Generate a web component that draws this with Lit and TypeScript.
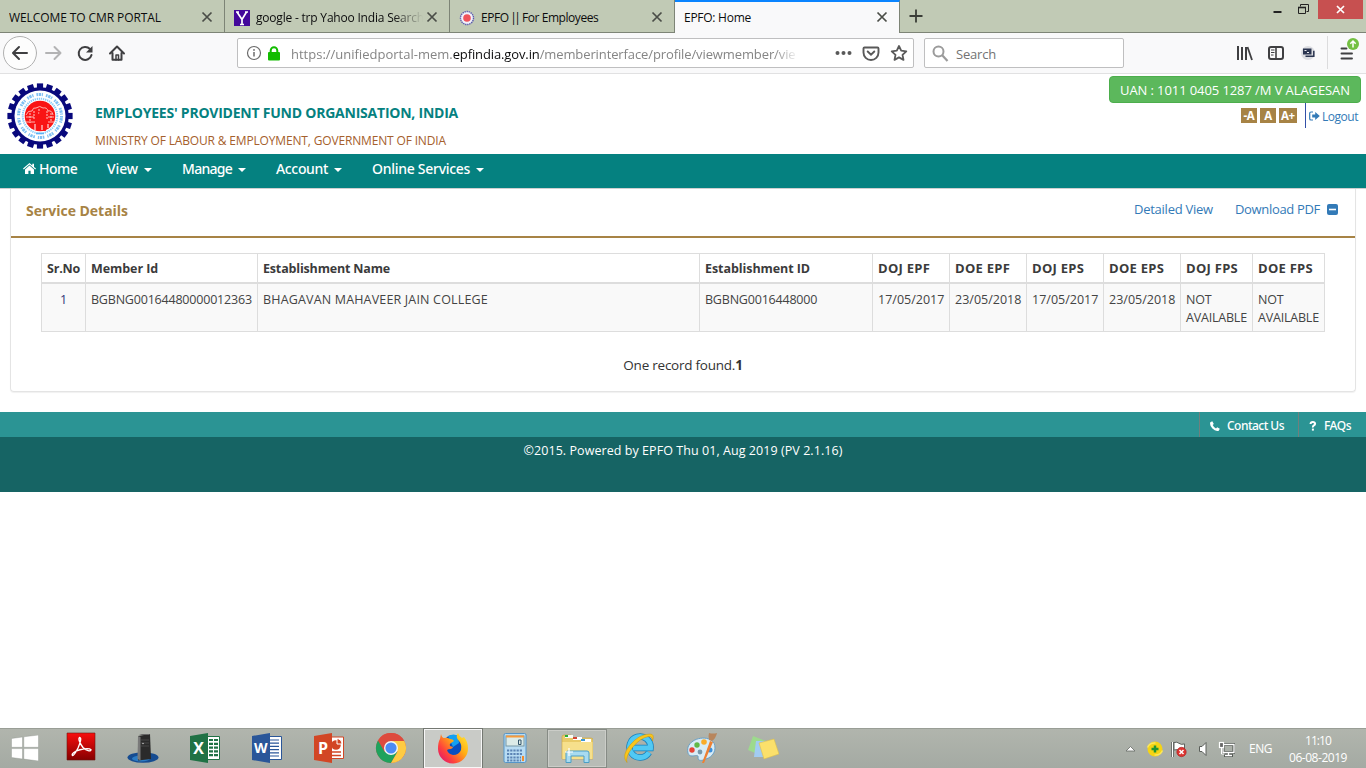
import { LitElement, html, css, svg } from "lit";
import { customElement } from "lit/decorators.js";

const closeIcon = html`<svg class="x" viewBox="0 0 12 12" width="12" height="12"><path d="M1.5 1.5l9 9M10.5 1.5l-9 9" stroke="#4a4d47" stroke-width="1.7" fill="none"/></svg>`;

/* EPFO gear emblem */
const teeth = Array.from({ length: 20 }, (_, i) => i * 18);
const emblem = html`<svg class="emblem" viewBox="-33 -33 66 66" width="66" height="66">
  ${teeth.map((a) => svg`<rect x="-3.1" y="-32.6" width="6.2" height="8" fill="#08087c" transform="rotate(${a})"/>`)}
  <circle r="28.800" fill="#08087c"/><circle r="25.500" fill="#fff"/>
  <circle r="21.500" fill="none" stroke="#7fc0f3" stroke-width="3" stroke-dasharray="1.6 .7 2.4 .8 1.2 3"/>
  <circle r="17.300" fill="none" stroke="#8ccbf7" stroke-width="2" stroke-dasharray="1.3 .8"/>
  <circle r="15.300" fill="#f91414"/>
  <path d="M-14-1q2-5 6-4q1-4 4-3q4-3 7 0q4-1 5 3q4-1 5 4M-14 1h8M8 1h6M-14 6h9M8 6h6" stroke="#ffb4ae" stroke-width="1" fill="none"/>
  <path d="M-10-3v10M-6-5v9M-1-7v5M7-5v9M11-3v9" stroke="#ffc8c2" stroke-width="1" stroke-dasharray="2 1"/>
  <circle cx="2" cy="-3" r="2.800" fill="#f91414"/><path d="M-2 1l4-1 4 2 1 7h-2l1 6H3l-1-5-2 5h-3l2-7z" fill="#f91414"/>
  <path d="M-5 8v6M8 8v4M2 9v5" stroke="#fff" stroke-width="1"/>
  <path d="M-4 17.500h8" stroke="#5eb2f3" stroke-width="1.500"/>
</svg>`;

const taskIcons = [
  { n: "pdf", s: "", g: svg`<defs><linearGradient id="ra" x2="0" y2="1"><stop offset="0" stop-color="#f90d0d"/><stop offset="1" stop-color="#850000"/></linearGradient></defs><path d="M2 1h28v27H2z" fill="url(#ra)" stroke="#6b1713" stroke-width=".6"/><path d="M14.500 5.500c2.500 0 .5 6-1.500 10.500-2 4-4 7.500-5.500 7.500-1.500-1.500 2.500-4.500 7.500-5.700 5-1.300 9.500-1.800 11 0 0 2-5 1-8-2.300-3-3.500-5-9-3.500-10z" stroke="#fff" stroke-width="1.400" fill="none"/>` },
  { n: "tower", s: "", g: svg`<ellipse cx="16" cy="25.500" rx="15.500" ry="5.200" fill="#164c91"/><ellipse cx="14" cy="26.500" rx="9" ry="3" fill="#2d7cc4"/><path d="M11 4l12-2 1 25-13 1.500z" fill="#2a2a2a"/><path d="M12 3l3-1h7l1 1z" fill="#666"/><path d="M11 4l2.500 1v23.500L10.500 27z" fill="#7a7a7a"/><path d="M14 8h8M14 11h8M14 14h8" stroke="#555" stroke-width=".7"/><circle cx="16" cy="11.500" r=".7" fill="#ddd"/>` },
  { n: "excel", s: "", g: svg`<path d="M18 4.500h12.500v23H18z" fill="#fff" stroke="#207245"/><path d="M20 8h9M20 11.800h9M20 15.600h9M20 19.400h9M20 23.200h9" stroke="#207245" stroke-width="2.200" stroke-dasharray="4 1"/><path d="M1 4l18-3v30L1 28z" fill="#207245"/><text x="9.500" y="21.500" text-anchor="middle" class="lt">X</text>` },
  { n: "word", s: "", g: svg`<path d="M18 4.500h12.500v23H18z" fill="#fff" stroke="#2a5699"/><path d="M19 8h9M19 11.200h9M19 14.400h9M19 17.600h9M19 20.800h9M19 24h9" stroke="#2a5699" stroke-width="1.200"/><path d="M1 4l18-3v30L1 28z" fill="#2a5699"/><text x="9.800" y="20.500" text-anchor="middle" class="lt w">W</text>` },
  { n: "ppt", s: "", g: svg`<path d="M18 5h12.500v21.500H18z" fill="#fff" stroke="#d24625"/><circle cx="23" cy="13" r="4.800" fill="#d24625"/><path d="M24 12V6.500a5.500 5.500 0 0 1 5 5.500z" fill="#d24625" stroke="#fff"/><path d="M19 20h9M19 23.500h9" stroke="#d24625" stroke-width="1.600"/><path d="M1 4l18-3v30L1 28z" fill="#d24625"/><text x="10" y="21.500" text-anchor="middle" class="lt">P</text>` },
  { n: "chrome", s: "", g: svg`<circle cx="16" cy="16" r="15" fill="#dd4b3e"/><path d="M3 8.500A15 15 0 0 0 16 31l6.500-11.300L9.500 19.700z" fill="#1fa25d"/><path d="M16 31A15 15 0 0 0 29 8.500L16 9.200l6.500 10.500z" fill="#fecb43"/><path d="M3 8.500A15 15 0 0 1 29.200 9H16z" fill="#dd4b3e"/><circle cx="16" cy="16" r="7" fill="#f3f6f4"/><circle cx="16" cy="16" r="5.600" fill="#4c8bf5"/>` },
  { n: "firefox", s: "active", g: svg`<defs><linearGradient id="ff" x1="1" x2="0" y2=".9"><stop offset="0" stop-color="#fff03b"/><stop offset=".4" stop-color="#ffac14"/><stop offset=".72" stop-color="#ff443b"/><stop offset="1" stop-color="#db1074"/></linearGradient></defs><circle cx="16.500" cy="14" r="11" fill="#0a4fc0"/><path d="M11 4q6-3 10 0l1 7-6 4z" fill="#13a0f2"/><path d="M4 2q1 4 3 4 3-1 6 1 3 0 4 2l-3 2q-2 1-1 3l3 1q0 1-2 2-3 0-4 1 1 4 6 5 6 0 8-5 1-6-2-9-4-4-1-8 1 3 4 5l2-1q4 5 4 11a15 15 0 0 1-30 1Q1 10 3 7z" fill="url(#ff)"/>` },
  { n: "calc", s: "", g: svg`<rect x="5" y="1.500" width="22" height="29" rx="1.500" fill="#b8dcf3" stroke="#5595c9"/><rect x="7" y="4" width="18" height="10" fill="#dcebe8" stroke="#7798a8"/><path d="M7 4.500h18" stroke="#f69a3c" stroke-width="2"/><path d="M19.500 8H22v4.500h-2.500z" fill="none" stroke="#33556c"/><path d="M8 18.500h16M8 22h16M8 25.500h14M8 28.500h14" stroke="#5b83b4" stroke-width="2.200" stroke-dasharray="2.200 1"/><path d="M24 24v5" stroke="#f58b2b" stroke-width="2"/>` },
  { n: "explorer", s: "open", g: svg`<path d="M1 5q0-2 2-2h7l2 3h18q2 0 2 2v19H1z" fill="#e9cb68" stroke="#c9a74a" stroke-width=".7"/><path d="M1.500 10h30v17h-30z" fill="#f6e08c"/><path d="M4 3h8v3H4z" fill="#f9fbf3"/><path d="M4 3h3v2H4z" fill="#27ae34"/><path d="M12 5h9v3h-9z" fill="#fff"/><path d="M12 5h4v2h-4z" fill="#d34735"/><path d="M20 7h10v3H20z" fill="#fff"/><path d="M20 7h4v2h-4z" fill="#3a97d5"/><path d="M5 30.500V21q0-2 2-2h19q2 0 2 2v9.500h-5V24H10v6.500z" fill="#a8dbf0" stroke="#4a9ec6"/><path d="M8 16v8M4 20h8" stroke="#fff" stroke-width="1.200"/>` },
  { n: "ie", s: "", g: svg`<path d="M26 20.500a10.500 10.500 0 1 1 1.500-4.500H10" fill="none" stroke="#1681bd" stroke-width="6.500"/><path d="M26 20.500a10.500 10.500 0 1 1 1.500-4.500H10" fill="none" stroke="#51c9f4" stroke-width="5"/><path d="M4 30.500Q-2 24 7 13T27 2q5 0 2.500 7 0-5-4-4.500Q17 6 9.500 15.500T4 30.500z" fill="#f9c51b" stroke="#c9960b" stroke-width=".5"/>` },
  { n: "paint", s: "", g: svg`<path d="M3 15C7 5 24 3 29 11c3 7-1 14-8 16-4 2-8 2-8-1 1-4-3-2-6-2-4 0-5-4-4-9z" fill="#d8ecf6" stroke="#6a9fc4"/><circle cx="7" cy="18" r="2.700" fill="#e74436"/><circle cx="12" cy="13" r="2.700" fill="#61b947"/><circle cx="19" cy="10" r="2.800" fill="#f9ac29"/><circle cx="15" cy="20" r="2.400" fill="#7798ab"/><circle cx="25" cy="18" r="2.500" fill="#3b91de"/><path d="M17 31l8-22 3 1-9 21z" fill="#ed8133"/><path d="M24 8q-1-4 0-7 4 1 8 0-1 5-5 8z" fill="#b8865d"/>` },
  { n: "notes", s: "", g: svg`<path d="M6 4l13 5-6 14L1 18z" fill="#9dda8d"/><path d="M9 9h14v16H7z" fill="#a2ccf2"/><path d="M12 11l15-4 5 15-15 5z" fill="#fbe06b" stroke="#dcc04f" stroke-width=".6"/>` },
];

const heads = ["Sr.No", "Member Id", "Establishment Name", "Establishment ID", "DOJ EPF", "DOE EPF", "DOJ EPS", "DOE EPS", "DOJ FPS", "DOE FPS"];
const headCls = ["h-sr", "h-mid", "h-en", "h-ei", "h-d", "h-d", "h-d", "h-d", "h-d", "h-d"];
const cells = ["1", "BGBNG00164480000012363", "BHAGAVAN MAHAVEER JAIN COLLEGE", "BGBNG0016448000", "17/05/2017", "23/05/2018", "17/05/2017", "23/05/2018", "NOT AVAILABLE", "NOT AVAILABLE"];
const cellCls = ["c-sr", "c-id", "c-en", "c-id", "c-d", "c-d", "c-d", "c-d", "c-na", "c-na"];

@customElement("app-root")
export class AppRoot extends LitElement {
  static styles = css`
    :host { display: flex; flex-direction: column; width: 1366px; height: 768px; overflow: hidden; background: #fff; font-family: "Open Sans", "Noto Sans", sans-serif; color: #333; white-space: nowrap; }
    * { box-sizing: border-box; }
    svg { display: block; flex: none; }
    .grow { flex: 1; }

    .tabs { display: flex; height: 33px; flex: none; background: #c1cab5; }
    .tab { display: flex; align-items: center; width: 225px; height: 33px; border-right: 1px solid #7d8476; border-bottom: 1px solid #7d8476; padding: 3px 11px 0 9px; font-size: 12px; color: #0c0c0d; }
    .tab .lab { flex: 1; overflow: hidden; }
    .tab svg.fav { margin-right: 6px; }
    .tab.sel { background: #f9f9fa; border-bottom: none; border-top: 2px solid #0a84ff; padding-top: 0; }
    .tab .x { margin: 0 0 1px 3px; }
    .t1 { letter-spacing: -.09px; } .t2 { letter-spacing: -.2px; } .t3 { letter-spacing: -.44px; } .t4 { letter-spacing: -.26px; }
    .bars { letter-spacing: -2.600px; margin: 0 1px 0 -1px; }
    .fade { -webkit-mask-image: linear-gradient(90deg, #000 82%, transparent); mask-image: linear-gradient(90deg, #000 82%, transparent); }
    .strip { display: flex; flex: 1; border-bottom: 1px solid #7d8476; padding-left: 8px; }
    .plus { margin-top: 8px; }
    .wmin { margin: 10px 0 0; }
    .wmax { margin: 4px 0 0 16px; }
    .wclose { display: flex; align-items: center; justify-content: center; width: 45px; height: 19px; background: #c75050; margin: 0 3px 0 9px; }

    .bar { display: flex; align-items: center; height: 41px; flex: none; background: #f9f9fa; border-bottom: 1px solid #e1e1e2; }
    .url { display: flex; align-items: center; width: 677px; height: 30px; border: 1px solid #bfbfc0; border-radius: 2px; background: #fff; padding: 0 5px 0 8px; font-size: 13px; color: #858585; }
    .url .txt { width: 508px; margin-left: 11px; padding-top: 1px; overflow: hidden; -webkit-mask-image: linear-gradient(90deg, #000 95%, transparent); mask-image: linear-gradient(90deg, #000 95%, transparent); }
    .url b { font-weight: 400; color: #0c0c0d; letter-spacing: -.12px; }
    .url .rest { letter-spacing: -.11px; }
    .lock { margin-left: 6px; }
    .find { display: flex; align-items: center; width: 200px; height: 30px; margin-left: 10px; border: 1px solid #bfbfc0; border-radius: 2px; background: #fff; padding: 1px 0 0 7px; font-size: 13px; letter-spacing: -.2px; color: #737373; gap: 7px; }

    .head { display: flex; height: 80px; flex: none; padding-left: 7px; }
    .emblem { margin-top: 9px; }
    .org { margin-left: 22px; padding-top: 29px; }
    .org h1 { margin: 0; font-size: 14px; line-height: 20px; font-weight: 700; letter-spacing: -.23px; color: #058180; }
    .org h2 { margin: 8px 0 0; font-size: 12px; line-height: 20px; font-weight: 400; letter-spacing: -.16px; color: #a5602c; }
    .user { display: flex; flex-direction: column; align-items: flex-end; padding: 2px 5px 0 0; }
    .uan { width: 252px; height: 27px; line-height: 27px; border: 1px solid #4cae4c; border-radius: 4px; background: #5cb85c; color: #fff; font-size: 13px; letter-spacing: -.09px; padding-left: 10px; }
    .tools { display: flex; height: 25px; padding-right: 3px; }
    .sz { height: 15px; margin: 5px 3px 0 0; background: #a78345; color: #fff; font-size: 11.500px; font-weight: 700; line-height: 16px; text-align: center; width: 16px; letter-spacing: -.3px; }
    .sz.p { width: 18px; margin-right: 8px; }
    .out { display: flex; align-items: center; border-left: 1px solid #3350a8; padding: 1px 0 0 3px; color: #337ab7; font-size: 12px; letter-spacing: -.47px; gap: 2px; }

    .nav { display: flex; height: 35px; flex: none; padding: 0 0 5px 23px; background: #058180; border-bottom: 1px solid #cfcfcf; color: #fff; font: 500 14px/19px "Noto Sans", sans-serif; }
    .nav div { display: flex; align-items: center; }
    .nav .caret { border: 4px solid transparent; border-top-color: #fff; border-bottom: 0; margin-top: 3px; }
    .n0 { width: 84px; } .n1 { width: 75px; } .n2 { width: 94px; } .n3 { width: 96px; } .n4 { width: 120px; }
    .n0 svg { margin-right: 3px; }
    .n0 { letter-spacing: -.5px; } .n1 span { width: 37px; letter-spacing: -.11px; } .n2 span { width: 56px; letter-spacing: -.71px; } .n3 span { width: 58px; letter-spacing: -.34px; } .n4 span { width: 104px; letter-spacing: -.28px; }

    .card { display: flex; flex-direction: column; height: 203px; flex: none; margin: 0 10px; border: 1px solid #e4e4e4; border-top: 0; border-radius: 0 0 4px 4px; box-shadow: 0 1px 1px rgba(0,0,0,.06); }
    .ttl { display: flex; align-items: center; height: 49px; padding: 0 17px 7px 15px; border-bottom: 2px solid #a78345; color: #337ab7; font-size: 13px; }
    .ttl strong { flex: 1; color: #a78345; font-size: 14px; letter-spacing: -.02px; margin-top: 2px; }
    .dv { width: 101px; letter-spacing: -.25px; } .dp { width: 92px; letter-spacing: -.33px; }
    .grid { display: grid; grid-template-columns: 44px 172px 442px 173px 77px 77px 77px 77px 72px 72px; grid-template-rows: 30px 48px; width: 1284px; margin: 15px 0 0 30px; border: solid #ddd; border-width: 1px 0 0 1px; font-size: 12.500px; color: #444; }
    .th { border-right: 1px solid #ddd; border-bottom: 2px solid #ddd; padding: 5px 0 0 5px; line-height: 20px; font-weight: 700; color: #3b3b3b; }
    .grid .td { border-right: 1px solid #ddd; border-bottom: 1px solid #ddd; background: #f9f9f9; padding: 7px 0 0 5px; line-height: 18px; }
    .h-sr { letter-spacing: -.2px; } .h-mid { letter-spacing: -.06px; } .h-en { letter-spacing: -.17px; } .h-ei { letter-spacing: -.07px; } .h-d { font-size: 13px; letter-spacing: .27px; padding-top: 4px; }
    .grid .c-sr { text-align: center; padding-left: 0; color: #337; } .c-id { letter-spacing: -.2px; } .c-en { letter-spacing: .17px; } .c-na { white-space: normal; letter-spacing: -.2px; }
    .rec { margin-top: 23px; text-align: center; font-size: 13.500px; line-height: 20px; letter-spacing: -.24px; }

    .links { display: flex; justify-content: flex-end; height: 25px; flex: none; margin-top: 20px; background: #2b9494; color: #fff; font: 500 12px/17px "Noto Sans", sans-serif; }
    .lk { display: flex; align-items: center; border-left: 1px solid #707f7d; padding: 2px 0 0 10px; }
    .lk svg { margin-right: 7px; }
    .cu { width: 99px; letter-spacing: -.53px; } .fq { width: 68px; letter-spacing: -.48px; }
    .copy { height: 55px; flex: none; background: #166464; color: #fff; text-align: center; font-size: 12.500px; line-height: 27px; letter-spacing: .06px; }

    .task { display: flex; height: 40px; flex: none; background: linear-gradient(#b1b5ad, #a4aaa3); border-top: 1px solid #999e96; }
    .start { width: 50px; padding: 6px 0 0 11px; }
    .slot { width: 62px; display: flex; justify-content: center; padding-top: 3px; }
    .slot.active, .slot.open { width: 60px; height: 39px; margin: 0 1px; padding-top: 2px; }
    .slot.active { width: 58px; margin: 0 2px; border: 1px solid #f7f7f7; outline: 1px solid #747872; background: #c9cbc7; }
    .slot.open { border: 1px solid #868b85; background: #b8bcb6; box-shadow: inset 0 0 0 1px #cbcdc8; }
    .lt { font: 700 16px "Open Sans", sans-serif; fill: #fff; } .lt.w { font-size: 14px; }
    .tray { display: flex; align-items: center; color: #fff; font-size: 12px; }
    .eng { letter-spacing: -.48px; width: 39px; margin-left: 14px; }
    .clock { width: 60px; text-align: center; line-height: 17px; margin-right: 18px; }
    .clock div { letter-spacing: -.46px; } .clock .tm { letter-spacing: -.9px; }
  `;

  render() {
    return html`
      <div class="tabs">
        <div class="tab"><span class="lab t1">WELCOME TO CMR PORTAL</span>${closeIcon}</div>
        <div class="tab"><svg class="fav" width="16" height="16" viewBox="0 0 16 16"><path fill="#43089b" d="M0 0h16v16H0z"/><path d="M3 2l5 7.500L12.500 2M8 9v5.500M2 2h3M11 2h3M6 14.500h4" stroke="#fff" stroke-width="1.700" fill="none"/></svg><span class="lab t2 fade">google - trp Yahoo India Search</span>${closeIcon}</div>
        <div class="tab"><svg class="fav" width="16" height="16" viewBox="0 0 16 16"><circle cx="8" cy="8" r="6.500" fill="#f2f2fb" stroke="#5c5cae" stroke-width="1.400" stroke-dasharray="1.400 .7"/><circle cx="8" cy="8" r="3.800" fill="#f0535b"/></svg><span class="lab t3">EPFO <span class="bars">||</span> For Employees</span>${closeIcon}</div>
        <div class="tab sel"><span class="lab t4">EPFO: Home</span>${closeIcon}</div>
        <div class="strip">
          <svg class="plus" width="16" height="16" viewBox="0 0 16 16"><path d="M8 1.500v13M1.500 8h13" stroke="#3a3d37" stroke-width="1.800"/></svg>
          <span class="grow"></span>
          <svg class="wmin" width="9" height="4"><path d="M.5 2h8" stroke="#222" stroke-width="2"/></svg>
          <svg class="wmax" width="11" height="11"><path d="M2.500 2.500V.500h8v7h-2" fill="none" stroke="#222"/><path d="M.5 3.500h7v6h-7z" fill="none" stroke="#222"/><path d="M0 3.500h8" stroke="#222" stroke-width="1.600"/></svg>
          <div class="wclose"><svg width="9" height="9" viewBox="0 0 9 9"><path d="M1 1l7 7M8 1L1 8" stroke="#fff" stroke-width="1.700"/></svg></div>
        </div>
      </div>

      <div class="bar">
        <svg width="237" height="40" viewBox="0 0 237 40" fill="none" stroke-linecap="round" stroke-linejoin="round">
          <circle cx="20" cy="20" r="16.500" fill="#fdfdfd" stroke="#b1b1b1"/>
          <path d="M27 20H13.500M19 14l-6 6 6 6" stroke="#3f3f41" stroke-width="2"/>
          <path d="M46 20h14M54.500 14l6 6-6 6" stroke="#b3b3b4" stroke-width="2"/>
          <path d="M90 16a6.500 6.500 0 1 0 1.500 6" stroke="#3f3f41" stroke-width="2"/><path d="M92.500 13v6.500H86z" fill="#3f3f41"/>
          <path d="M110 20.500l7-7 7 7M112.500 20v6.800h9V20" stroke="#3f3f41" stroke-width="2"/><path d="M116 27v-5h2.500v5" stroke="#3f3f41" stroke-width="1.500"/>
        </svg>
        <div class="url">
          <svg width="16" height="16" viewBox="0 0 16 16"><circle cx="8" cy="8" r="6.500" fill="none" stroke="#6b6b6b" stroke-width="1.200"/><path d="M8 7v4.500" stroke="#6b6b6b" stroke-width="1.500"/><circle cx="8" cy="4.900" r=".95" fill="#6b6b6b"/></svg>
          <svg class="lock" width="12" height="15" viewBox="0 0 12 15"><path d="M2.700 7V4.500a3.300 3.300 0 0 1 6.600 0V7" fill="none" stroke="#12bc00" stroke-width="2"/><rect y="6" width="12" height="8.500" rx="1" fill="#12bc00"/></svg>
          <span class="txt">https://unifiedportal-mem.<b>epfindia.gov.in</b><span class="rest">/memberinterface/profile/viewmember/vie</span></span>
          <span class="grow"></span>
          <svg width="74" height="20" viewBox="0 0 74 20" fill="none"><g fill="#595959"><circle cx="3.500" cy="10" r="2"/><circle cx="9.500" cy="10" r="2"/><circle cx="15.500" cy="10" r="2"/></g><path d="M30.500 4.500h13q1 0 1 1v4a7 7 0 0 1-15 0v-4q0-1 1-1z" stroke="#595959" stroke-width="1.900"/><path d="M33.700 8.500l3.300 3.200 3.300-3.200" stroke="#595959" stroke-width="1.900" stroke-linecap="round"/><path d="M65 3l2.200 4.700 5.100.6-3.800 3.500 1 5.100L65 14.400l-4.500 2.500 1-5.100-3.800-3.500 5.100-.6z" stroke="#595959" stroke-width="1.800" stroke-linejoin="round"/></svg>
        </div>
        <div class="find"><svg width="17" height="18" viewBox="0 0 17 18"><circle cx="6.500" cy="6.500" r="5" fill="none" stroke="#9b9b9b" stroke-width="2"/><path d="M10 10l5.500 6" stroke="#9b9b9b" stroke-width="2.200"/></svg>Search</div>
        <span class="grow"></span>
        <svg width="130" height="40" viewBox="0 0 130 40" fill="none">
          <path d="M2 13v14M6 14v13M10 14v13" stroke="#3f3f41" stroke-width="2"/><path d="M11.500 14L16 27" stroke="#3f3f41" stroke-width="1.800"/>
          <rect x="33" y="14" width="14" height="12" rx="2" stroke="#3f3f41" stroke-width="2"/><path d="M40 14v12" stroke="#3f3f41" stroke-width="1.600"/><path d="M35 17h3.500M35 19.500h3.500M35 22h2.500" stroke="#3f3f41"/>
          <circle cx="72" cy="20" r="7" fill="#dcdde1"/><rect x="67" y="15.500" width="8.500" height="6" fill="#2b3550"/><path d="M69.500 23.300h8.300v-5.500" stroke="#2b3550" stroke-width="1.500"/><path d="M68.500 17.500h2M71 19.500h2" stroke="#fff" stroke-width=".9"/>
          <path d="M91.500 3v33" stroke="#dcdcdd"/>
          <path d="M105.500 15.500h5M105.500 20.500h10.500M105.500 25.500h10.500" stroke="#3f3f41" stroke-width="1.900" stroke-linecap="round"/>
          <circle cx="117" cy="11" r="6" fill="#74c042"/><path d="M117 14.500v-6M114.300 10.700L117 8l2.700 2.700" stroke="#fff" stroke-width="1.500"/>
        </svg>
      </div>

      <div class="head">
        ${emblem}
        <div class="org"><h1>EMPLOYEES' PROVIDENT FUND ORGANISATION, INDIA</h1><h2>MINISTRY OF LABOUR &amp; EMPLOYMENT, GOVERNMENT OF INDIA</h2></div>
        <span class="grow"></span>
        <div class="user">
          <div class="uan">UAN : 1011 0405 1287 /M V ALAGESAN</div>
          <div class="tools"><span class="sz">-A</span><span class="sz">A</span><span class="sz p">A+</span>
            <span class="out"><svg width="11" height="10" viewBox="0 0 11 10"><path d="M4 1H2Q.7 1 .7 2.300v5.400Q.7 9 2 9h2" fill="none" stroke="#337ab7" stroke-width="1.200"/><path d="M3.200 3.400h3V1L10.800 5 6.200 9V6.600h-3z" fill="#337ab7"/></svg>Logout</span>
          </div>
        </div>
      </div>

      <div class="nav">
        <div class="n0"><svg width="13" height="12" viewBox="0 0 13 12" fill="#fff"><path d="M6.500 2.600L2 6.500V11h3.400V7.800h2.200V11H11V6.500z"/><path d="M6.500 0L0 5.600l.8.900 5.700-4.900 5.700 4.900.8-.9-2-1.700V.7H9.300v1.700z"/></svg>Home</div>
        <div class="n1"><span>View</span><i class="caret"></i></div>
        <div class="n2"><span>Manage</span><i class="caret"></i></div>
        <div class="n3"><span>Account</span><i class="caret"></i></div>
        <div class="n4"><span>Online Services</span><i class="caret"></i></div>
      </div>

      <div class="card">
        <div class="ttl"><strong>Service Details</strong><span class="dv">Detailed View</span><span class="dp">Download PDF</span>
          <svg width="11" height="11" viewBox="0 0 11 11"><rect width="11" height="11" rx="2" fill="#337ab7"/><path d="M2 5.500h7" stroke="#fff" stroke-width="1.600"/></svg></div>
        <div class="grid">
          ${heads.map((h, i) => html`<div class="th ${headCls[i]}">${h}</div>`)}
          ${cells.map((c, i) => html`<div class="td ${cellCls[i]}">${c}</div>`)}
        </div>
        <div class="rec">One record found.<b>1</b></div>
      </div>

      <div class="links">
        <div class="lk cu"><svg width="10" height="10" viewBox="0 0 10 10"><path d="M.3 1.300L2.300.2l1.500 2.700-1.100 1.200q1 2.200 3.300 3.300l1.200-1.200 2.600 1.500-1 2Q5.500 10.800 2.400 7.600T.3 1.300z" fill="#fff"/></svg>Contact Us</div>
        <div class="lk fq"><svg width="8" height="10" viewBox="0 0 8 10"><path d="M1.500 3q.2-2 2.300-2t2.300 1.700q0 1-1.200 1.700T3.900 6.500" fill="none" stroke="#fff" stroke-width="2"/><path d="M2.900 7.600h2v2h-2z" fill="#fff"/></svg>FAQs</div>
      </div>
      <div class="copy">©2015. Powered by EPFO Thu 01, Aug 2019 (PV 2.1.16)</div>
      <div class="grow"></div>

      <div class="task">
        <div class="start"><svg width="28" height="26" viewBox="0 0 28 26"><path d="M.5 3.500L11.500 2v10.300H.5zM12.800 1.800L27.500 0v12.300H12.800zM.5 13.600h11V24L.5 22.500zM12.800 13.600h14.700V26l-14.700-1.900z" fill="#fff" stroke="#85898380" stroke-width=".7"/></svg></div>
        ${taskIcons.map((t) => html`<div class="slot ${t.s}"><svg width="32" height="32" viewBox="0 0 32 32">${t.g}</svg></div>`)}
        <span class="grow"></span>
        <div class="tray">
          <svg width="110" height="24" viewBox="0 0 110 24" fill="none">
            <path d="M1 14l4.500-4.500L10 14z" fill="#fff" stroke="#666a66" stroke-width=".8"/>
            <circle cx="30" cy="12" r="7.500" fill="#f6d414"/><path d="M22.500 10.500q2-5 8-4.500M37.500 13.500q-2 5-8 4.500" stroke="#fbe75b" stroke-width="1.500"/><path d="M30 8.500v7M26.500 12h7" stroke="#1f9432" stroke-width="2.500"/>
            <path d="M47.500 5v15" stroke="#555a55" stroke-width="3"/><path d="M47.500 5v15" stroke="#fff" stroke-width="1.300"/><path d="M49 5.500q3-1 5 .8t5.500.6v7.600q-3 1-5-.8T49 13z" fill="#fff" stroke="#5e625e"/><circle cx="56.500" cy="15" r="4.700" fill="#dc3430" stroke="#a91d1d" stroke-width=".6"/><path d="M54.500 13l4 4M58.500 13l-4 4" stroke="#fff" stroke-width="1.500"/>
            <path d="M74.500 9.500H77l4-4v13l-4-4h-2.500z" fill="#fff" stroke="#5a5e5a"/>
            <path d="M98 7.500h11v8H98zM103.500 15.500v3M99 18.500h9" stroke="#555a55" stroke-width="3.200"/><path d="M98 7.500h11v8H98zM103.500 15.500v3M100 18.500h7" stroke="#fff" stroke-width="1.300"/><rect x="94.500" y="5.500" width="4" height="5" fill="#666" stroke="#fff" stroke-width="1.200"/><path d="M96.500 11v6h3" stroke="#fff"/>
          </svg>
          <span class="eng">ENG</span>
          <div class="clock"><div class="tm">11:10</div><div>06-08-2019</div></div>
        </div>
      </div>
    `;
  }
}
